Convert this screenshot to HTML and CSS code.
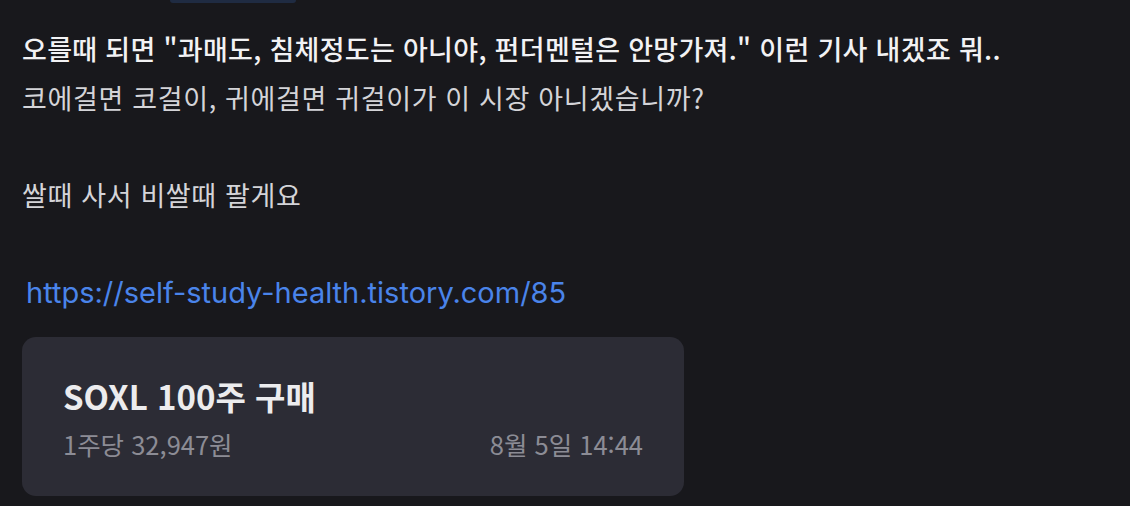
FILE: index.html
```html
<!DOCTYPE html>
<html lang="ko">
<head>
    <meta charset="UTF-8">
    <title>게시글</title>
    <link rel="stylesheet" href="styles.css">
</head>
<body>
    <div class="top-tab"></div>

    <div class="post">
        <p class="lead">오를때 되면 "과매도, 침체정도는 아니야, 펀더멘털은 안망가져." 이런 기사 내겠죠 뭐..</p>
        <p>코에걸면 코걸이, 귀에걸면 귀걸이가 이 시장 아니겠습니까?</p>
        <p class="blank">&nbsp;</p>
        <p>쌀때 사서 비쌀때 팔게요</p>
        <p class="blank">&nbsp;</p>
        <p><a class="link" href="#">https://self-study-health.tistory.com/85</a></p>

        <div class="trade-card">
            <div class="trade-title">SOXL 100주 구매</div>
            <div class="trade-meta">
                <span>1주당 32,947원</span>
                <span>8월 5일 14:44</span>
            </div>
        </div>
    </div>
</body>
</html>
```

FILE: styles.css
```css
/* 기본 */
body {
    margin: 0;
    background-color: #18181c;
    font-family: "Noto Sans CJK KR", "Noto Sans", sans-serif;
    color: #d4d4d8;
    height: 506px;
    overflow: hidden;
}

.top-tab {
    width: 126px;
    height: 3px;
    margin-left: 170px;
    background-color: #1f2b42;
    border-radius: 0 0 8px 8px;
}

.post {
    padding: 20px 0 0 22px;
}

.post p {
    margin: 0;
    font-size: 27px;
    line-height: 48.5px;
    letter-spacing: 0.65px;
    white-space: nowrap;
}

.post p.lead {
    color: #f2f2f4;
    font-weight: 500;
    line-height: 51px;
    letter-spacing: 0.3px;
}

.link {
    color: #4a84ea;
    text-decoration: none;
    font-family: Inter, "Noto Sans", sans-serif;
    margin-left: 4px;
    font-size: 29px;
    letter-spacing: 0;
}

/* 거래 카드 */
.trade-card {
    width: 662px;
    height: 159px;
    box-sizing: border-box;
    margin-top: 19px;
    padding: 39px 41px 0 41px;
    background-color: #2c2c35;
    border-radius: 14px;
}

.trade-title {
    font-size: 33px;
    font-weight: 600;
    color: #ececee;
    line-height: 40px;
}

.trade-meta {
    display: flex;
    justify-content: space-between;
    margin-top: 13px;
    font-size: 25.5px;
    line-height: 30px;
    color: #8c8c95;
}
```
